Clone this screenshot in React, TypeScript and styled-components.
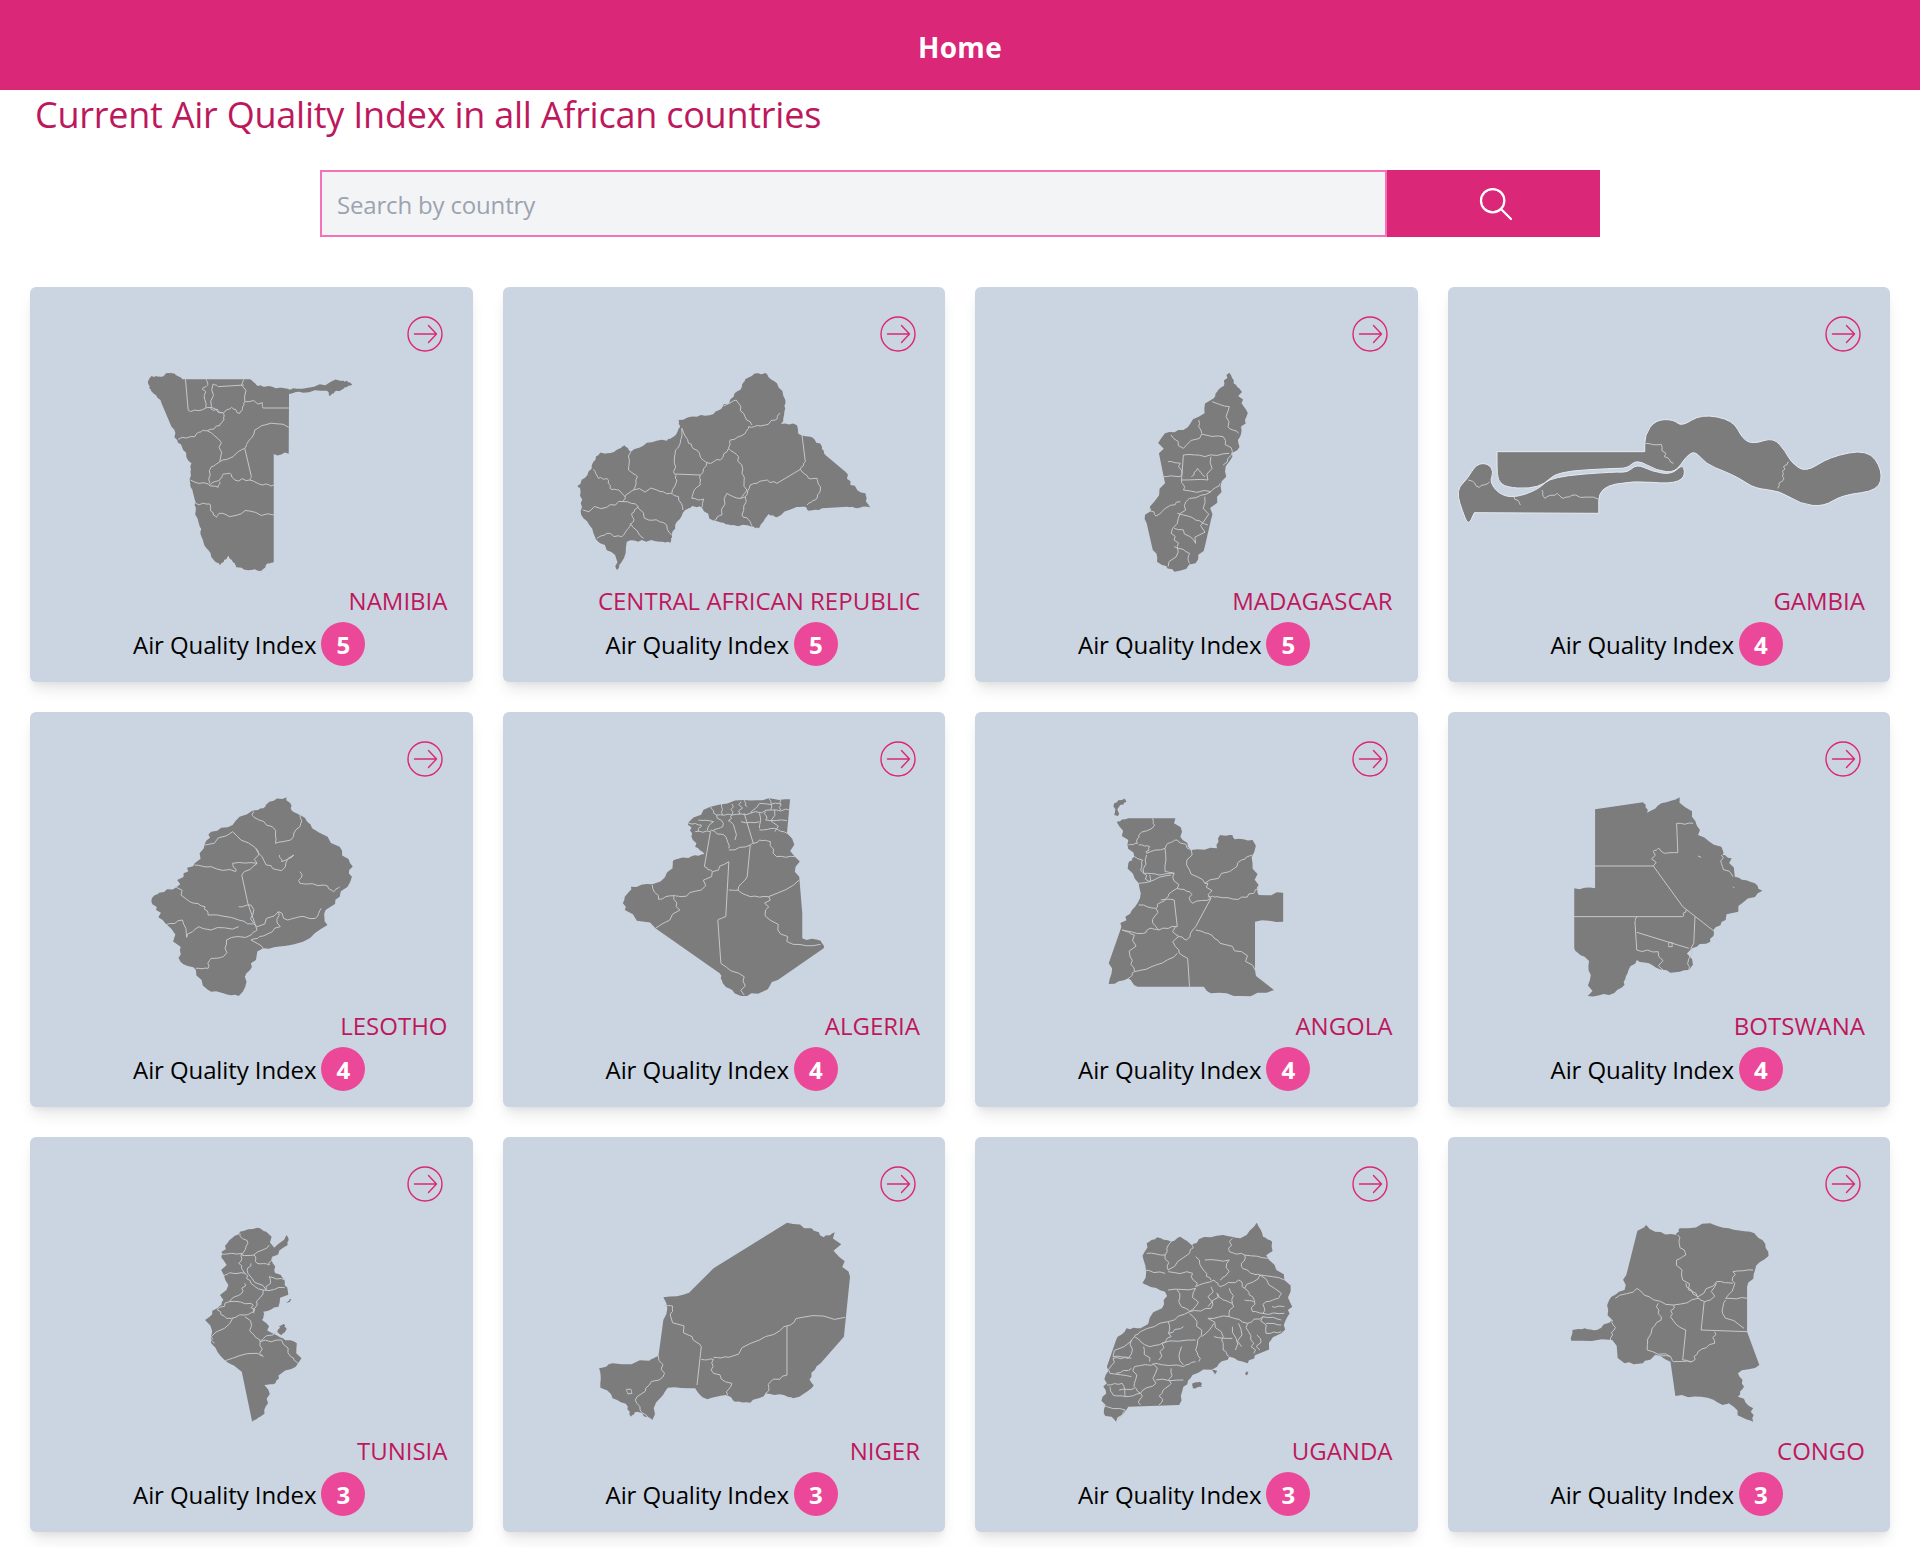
import React from "react"
import styled, { createGlobalStyle } from "styled-components"

const GlobalStyle = createGlobalStyle`
  html, body {
    margin: 0;
    padding: 0;
    background: #fff;
    font-family: "Open Sans", "Liberation Sans", sans-serif;
  }
  * { box-sizing: border-box; }
`

const Header = styled.header`
  height: 90px;
  background: #db2777;
  display: flex;
  align-items: center;
  justify-content: center;
  color: #fff;
  font-size: 28px;
  font-weight: 700;
  letter-spacing: 0.3px;
  padding-top: 4px;
`

const Title = styled.h1`
  margin: 5px 0 0;
  padding-left: 35px;
  height: 40px;
  line-height: 40px;
  font-size: 36px;
  font-weight: 400;
  color: #be185d;
  letter-spacing: -0.24px;
`

const SearchBar = styled.form`
  display: flex;
  width: 1280px;
  height: 67px;
  margin: 35px auto 50px;
`

const SearchInput = styled.input`
  flex: 1;
  min-width: 0;
  border: 2px solid #f472b6;
  background: #f3f4f6;
  padding: 2px 15px 0;
  font: inherit;
  font-size: 24px;
  letter-spacing: -0.17px;
  outline: none;
  &::placeholder {
    color: #9ca3af;
    opacity: 1;
  }
`

const SearchButton = styled.button`
  width: 213px;
  border: 0;
  padding: 0 0 0 4px;
  background: #db2777;
  display: flex;
  align-items: center;
  justify-content: center;
  svg {
    width: 40px;
    height: 40px;
    fill: none;
    stroke: #fff;
    stroke-width: 1.35;
    stroke-linecap: round;
    stroke-linejoin: round;
  }
`

const Grid = styled.main`
  display: grid;
  grid-template-columns: repeat(4, 1fr);
  gap: 30px;
  padding: 0 30px 16px;
`

const Card = styled.article`
  height: 395px;
  padding: 29px 24px 16px;
  background: #cbd5e1;
  border-radius: 6px;
  box-shadow: 0 10px 15px -3px rgba(0, 0, 0, 0.1), 0 4px 6px -2px rgba(0, 0, 0, 0.05);
  display: flex;
  flex-direction: column;
`

const ArrowIcon = styled.svg`
  align-self: flex-end;
  width: 36px;
  height: 36px;
  margin-right: 5.5px;
  flex: none;
  fill: none;
  stroke: #db2777;
  stroke-width: 1.4;
  stroke-linecap: round;
  stroke-linejoin: round;
`

const CountryMap = styled.svg`
  display: block;
  flex: none;
  width: calc(100% + 48px);
  margin: 18px -24px 0;
  height: 205px;
`

const Land = styled.path<{ $outlined?: boolean }>`
  fill: #7c7c7c;
  stroke: ${(p) => (p.$outlined ? "#e6ebf1" : "none")};
  stroke-width: 1;
  vector-effect: non-scaling-stroke;
`

const Borders = styled.path`
  fill: none;
  stroke: #c4c8cc;
  stroke-width: 1;
  stroke-linejoin: round;
  vector-effect: non-scaling-stroke;
`

const CountryName = styled.h2`
  margin: 10px 1px 0 0;
  height: 32px;
  line-height: 32px;
  font-size: 24px;
  font-weight: 400;
  text-align: right;
  color: #be185d;
  white-space: nowrap;
`

const IndexRow = styled.div`
  margin-top: 5px;
  display: flex;
  align-items: center;
  justify-content: center;
  gap: 5px;
  padding-right: 4px;
  font-size: 24px;
  color: #000;
  letter-spacing: -0.1px;
`

const Badge = styled.span`
  width: 44px;
  height: 44px;
  border-radius: 50%;
  background: #ec4899;
  color: #fff;
  font-weight: 700;
  display: flex;
  align-items: center;
  justify-content: center;
  letter-spacing: 0;
`

type Country = {
  name: string
  index: number
  viewBox: string
  land: string
  lines: string
  outlined?: boolean
}

type Point = [number, number]

const parseSubpaths = (d: string) =>
  d
    .split("M")
    .filter((s) => s.trim())
    .map((s) => ({
      closed: s.includes("Z"),
      points: s
        .replace("Z", "")
        .trim()
        .split(" L")
        .map((p) => p.split(",").map(Number) as Point),
    }))

const dist = (a: Point, b: Point) => Math.hypot(a[0] - b[0], a[1] - b[1])

const noise = (x: number, y: number) => {
  const s = Math.sin(x * 12.9898 + y * 78.233) * 43758.5453
  return s - Math.floor(s) - 0.5
}

// traced coast lines are coarse, so break the short edges up a little. long ones are real straight borders
const roughen = (d: string) =>
  parseSubpaths(d)
    .map(({ closed, points }) => {
      const ring = closed ? [...points, points[0]] : points
      let out = `M${ring[0][0]},${ring[0][1]}`
      for (let i = 1; i < ring.length; i++) {
        const [a, b] = [ring[i - 1], ring[i]]
        const len = dist(a, b)
        if (len > 8 && len < 75) {
          const nx = (a[1] - b[1]) / len
          const ny = (b[0] - a[0]) / len
          ;[0.25, 0.5, 0.75].forEach((t) => {
            const mx = a[0] + (b[0] - a[0]) * t
            const my = a[1] + (b[1] - a[1]) * t
            const off = noise(mx, my) * len * 0.22
            out += ` L${(mx + nx * off).toFixed(1)},${(my + ny * off).toFixed(1)}`
          })
        }
        out += ` L${b[0]},${b[1]}`
      }
      return closed ? out + " Z" : out
    })
    .join(" ")

// rounds the lobes, keeps corners that sit on a long straight edge
const smooth = (d: string) =>
  parseSubpaths(d)
    .map(({ points }) => {
      const n = points.length
      let out = ""
      points.forEach((cur, i) => {
        const prev = points[(i + n - 1) % n]
        const next = points[(i + 1) % n]
        const sharp = dist(prev, cur) > 110 || dist(cur, next) > 110
        const cmd = i === 0 ? "M" : " L"
        if (sharp) {
          out += `${cmd}${cur[0]},${cur[1]}`
        } else {
          const inX = (prev[0] + cur[0]) / 2
          const inY = (prev[1] + cur[1]) / 2
          const outX = (cur[0] + next[0]) / 2
          const outY = (cur[1] + next[1]) / 2
          out += `${cmd}${inX},${inY} Q${cur[0]},${cur[1]} ${outX},${outY}`
        }
      })
      return out + " Z"
    })
    .join(" ")

const countries: Country[] = [
  {
    name: "NAMIBIA",
    index: 5,
    viewBox: "30 270 1329 615",
    land: "M386,300 L392,290 L410,288 L425,290 L445,279 L462,280 L478,290 L492,298 L690,298 L710,315 L735,320 L780,323 L807,327 L808,330 L822,325 L830,326 L900,313 L965,303 L985,305 L998,314 L975,322 L965,330 L945,335 L930,348 L922,332 L850,338 L808,342 L807,521 L762,522 L762,846 L745,850 L725,872 L705,868 L680,870 L650,862 L645,850 L632,838 L625,828 L612,845 L600,855 L580,838 L560,805 L545,770 L540,740 L528,690 L525,660 L512,620 L512,575 L515,550 L490,510 L472,480 L455,440 L425,370 L400,340 L388,325 Z",
    lines:
      "M497,298 L505,390 L512,395 L560,383 L610,398 L613,420 L600,437 L562,452 L550,450 L525,470 L475,478 M562,452 L605,488 L600,545 L575,560 L570,610 M560,298 L565,313 L548,328 L558,335 L558,383 M580,312 L575,380 L572,385 L610,398 M580,312 L595,320 L672,315 M672,298 L675,365 L728,368 L730,384 L807,384 M675,365 L668,385 L660,400 L635,382 L613,398 M807,442 L735,435 L705,450 L682,490 L675,505 L695,590 L690,600 L730,615 L762,615 M675,505 L640,530 L600,545 M570,615 L600,600 L610,582 L630,580 L645,600 L690,600 M512,600 L565,612 L595,622 L600,605 M528,670 L570,672 L575,695 L590,712 L598,700 L640,708 L690,693 L762,705",
  },
  {
    name: "CENTRAL AFRICAN REPUBLIC",
    index: 5,
    viewBox: "9 270 1326 615",
    land: "M232,618 L262,585 L280,545 L300,518 L320,520 L360,505 L372,495 L392,515 L440,488 L500,482 L520,470 L540,440 L535,420 L590,410 L640,402 L665,385 L700,350 L725,320 L735,298 L775,280 L800,282 L830,310 L855,360 L852,395 L842,432 L890,436 L895,462 L935,472 L965,500 L975,525 L1035,575 L1050,615 L1095,640 L1100,670 L1110,682 L1070,685 L1040,680 L965,685 L925,692 L915,680 L880,685 L830,712 L805,702 L785,730 L775,745 L755,740 L700,735 L670,728 L640,722 L605,683 L575,678 L555,690 L530,725 L515,765 L510,788 L480,785 L425,780 L380,785 L362,850 L350,870 L345,825 L300,790 L280,760 L250,715 L242,670 L240,625 Z",
    lines:
      "M280,568 L295,595 L320,595 L330,625 L355,630 L375,650 L370,665 L320,682 L248,690 M370,665 L415,680 L395,700 L400,725 L385,745 L365,770 L320,760 L290,775 M392,515 L385,570 L412,590 L400,630 L375,650 M400,630 L470,630 L510,640 L535,650 L548,690 M410,680 L445,720 L490,728 L515,765 M390,730 L430,775 M545,445 L540,490 L525,520 L520,575 L530,600 L515,640 M545,445 L565,490 L590,510 L620,548 L600,585 L525,582 M620,548 L660,540 L685,505 L690,480 L735,460 L745,440 L780,438 L825,420 L840,400 M670,378 L708,360 L730,400 L755,435 M685,505 L715,530 L725,580 L740,630 L720,655 L680,640 L665,705 L640,722 M600,585 L600,615 L580,635 L575,655 L610,657 L605,683 M720,655 L735,650 L725,705 L750,725 L755,740 M735,650 L750,615 L790,602 L830,610 L900,568 L915,545 L905,465 M900,568 L925,595 L950,595 L960,630 L945,660 L920,675",
  },
  {
    name: "MADAGASCAR",
    index: 5,
    viewBox: "24.5 270 723 615",
    land: "M440,278 L447,310 L456,325 L460,370 L468,410 L460,450 L455,490 L445,530 L435,590 L420,650 L410,720 L400,800 L385,850 L350,875 L330,855 L315,810 L305,730 L310,680 L335,610 L325,520 L335,460 L365,450 L390,410 L410,360 L420,335 L432,310 Z",
    lines:
      "M412,365 L440,380 L438,440 L455,460 M390,420 L395,460 M345,465 L365,505 L395,462 L430,470 L445,515 L430,555 M365,525 L400,530 L440,520 M340,545 L360,550 L360,590 L330,590 M365,525 L362,600 L405,600 L410,530 M378,590 L388,565 L400,590 M362,600 L365,630 L410,635 L425,610 M410,635 L375,655 L360,700 L345,760 L355,800 L340,860 M310,685 L320,708 L340,680 L360,665 M355,700 L385,720 L405,735 M400,650 L400,720 L385,790 L365,750 L350,745 M350,800 L375,820 L375,850",
  },
  {
    name: "GAMBIA",
    index: 4,
    viewBox: "797 270 722 615",
    outlined: true,
    land: "M877,515 L1118,515 L1118,465 L1135,420 L1165,418 L1178,440 L1210,402 L1262,420 L1278,478 L1296,492 L1328,472 L1348,515 L1356,545 L1380,578 L1420,530 L1482,508 L1506,570 L1500,632 L1440,645 L1410,680 L1372,672 L1338,632 L1298,626 L1272,594 L1248,574 L1218,552 L1200,512 L1185,530 L1168,578 L1138,572 L1105,538 L1090,565 L1065,565 L975,575 L955,612 L930,626 L892,622 L878,602 L877,560 Z M815,620 L828,598 L843,552 L862,550 L872,575 L865,605 L880,642 L905,654 L945,628 L965,590 L1070,575 L1090,578 L1105,552 L1130,574 L1162,584 L1181,550 L1184,594 L1160,612 L1100,602 L1043,622 L1043,700 L840,698 L830,738 L820,690 L813,650 Z",
    lines:
      "M1118,490 L1145,493 L1150,530 L1165,550 M1352,545 L1342,575 L1345,595 L1335,625 M830,600 L848,622 L865,605 M950,630 L955,655 L975,640 L985,655 L1005,645 L1043,658 M905,650 L915,675",
  },
  {
    name: "LESOTHO",
    index: 4,
    viewBox: "49 285 723 615",
    land: "M248,595 L260,578 L288,562 L300,520 L318,490 L335,430 L345,395 L380,375 L412,332 L430,325 L440,305 L468,292 L475,325 L490,345 L510,385 L555,440 L572,490 L575,530 L555,590 L532,630 L535,675 L495,725 L465,738 L430,745 L410,790 L400,830 L390,888 L365,880 L340,870 L320,810 L295,785 L295,740 L270,670 L255,630 Z",
    lines:
      "M412,332 L415,352 L445,380 L450,430 L475,420 L490,380 L490,345 M335,435 L380,395 L415,440 L420,490 L395,525 L405,610 L420,690 L410,705 L370,720 L365,770 L345,775 L340,805 L320,805 M418,445 L435,495 L460,512 L480,465 L460,485 L457,465 M318,495 L345,500 L385,515 L380,490 L420,490 M490,515 L490,550 L530,555 L545,575 L555,560 M288,562 L310,605 L335,620 L340,645 L390,660 L420,680 M270,675 L298,660 L305,712 L325,680 L345,690 L390,680 M420,680 L455,635 L470,660 L490,650 L515,655 L525,625 M455,635 L458,680 L430,708 L410,720 L430,745 M390,620 L410,615 L415,670",
  },
  {
    name: "ALGERIA",
    index: 4,
    viewBox: "821 285 723 615",
    land: "M1020,590 L1030,560 L1065,553 L1098,505 L1100,480 L1130,468 L1150,462 L1135,440 L1130,400 L1125,365 L1160,320 L1215,300 L1255,295 L1290,298 L1285,400 L1298,470 L1305,530 L1310,640 L1310,715 L1340,722 L1345,745 L1270,840 L1245,875 L1210,888 L1180,850 L1175,820 L1070,685 L1020,630 Z",
    lines:
      "M1135,395 L1160,395 L1150,500 L1163,515 L1145,570 L1110,590 L1100,587 L1075,598 L1065,555 M1100,587 L1110,630 L1070,685 M1163,515 L1190,485 L1185,650 L1172,660 L1177,790 L1215,830 L1215,885 M1190,450 L1225,435 L1220,530 L1205,570 L1225,590 L1255,590 L1305,540 M1225,435 L1240,420 L1258,425 L1268,470 L1298,470 M1205,570 L1190,570 M1255,590 L1250,630 L1270,690 L1295,733 L1340,733 M1160,390 L1185,410 L1190,445 M1190,360 L1200,420 M1215,340 L1230,430 M1240,390 L1265,385 L1285,400 M1160,320 L1170,345 L1195,345 L1195,312 M1195,345 L1225,340 L1240,310 M1225,340 L1260,330 L1290,330 M1140,360 L1165,365 L1155,390 M1240,340 L1240,385 M1265,330 L1265,395 M1170,345 L1180,380 L1165,390 M1215,300 L1220,320 M1255,295 L1258,330 M1125,370 L1145,375 L1140,395 M1195,345 L1190,365 M1178,312 L1180,345 M1210,305 L1208,342 M1240,310 L1275,312 M1275,300 L1275,330 M1210,365 L1240,365 M1250,335 L1250,360 L1285,362",
  },
  {
    name: "ANGOLA",
    index: 4,
    viewBox: "24.5 285 723 615",
    land: "M252,310 L268,295 L272,305 L260,320 L258,348 L252,345 Z M256,365 L275,355 L352,355 L360,410 L378,450 L420,445 L425,405 L445,405 L448,418 L478,420 L478,490 L488,555 L488,585 L528,578 L528,665 L482,665 L482,810 L513,870 L460,888 L410,880 L398,860 L290,860 L275,835 L243,852 L243,790 L262,690 L270,650 L290,610 L292,550 L275,490 L285,470 L275,420 Z",
    lines:
      "M315,355 L318,375 L292,405 L290,430 L275,435 M292,435 L310,440 L305,460 L335,445 L340,430 L355,420 L378,450 L375,510 L400,550 L440,515 L460,480 L478,465 M285,470 L298,480 L295,510 L310,545 L292,550 M305,465 L300,520 L325,525 L350,520 L355,565 L375,575 L380,610 L410,595 L405,550 L400,550 M335,445 L335,515 L350,520 M310,525 L310,545 L345,525 M355,565 L340,590 L325,610 L320,625 L292,615 M328,600 L350,600 L355,680 L325,690 L310,685 L300,700 L265,690 M320,625 L315,670 L325,690 M352,680 L352,740 L372,775 L375,860 M410,595 L385,680 L370,720 L355,705 M385,690 L405,700 L425,730 L460,755 L482,810 M405,590 L420,590 L455,598 L480,580 L488,560 M265,690 L285,705 L278,770 L285,815 L320,795 L355,760 M285,815 L275,835",
  },
  {
    name: "BOTSWANA",
    index: 4,
    viewBox: "797 285 722 615",
    land: "M1037,328 L1115,307 L1122,338 L1145,310 L1175,292 L1195,350 L1205,405 L1243,440 L1245,465 L1260,475 L1265,530 L1290,545 L1310,572 L1280,605 L1250,660 L1230,690 L1225,725 L1195,745 L1190,810 L1160,818 L1130,795 L1105,780 L1090,820 L1085,855 L1060,885 L1025,888 L1030,825 L1020,770 L1003,745 L1003,565 L1037,565 Z",
    lines:
      "M1037,498 L1132,498 L1180,620 L1230,692 M1003,650 L1180,650 L1185,630 M1132,498 L1132,455 L1140,445 L1150,460 L1172,458 L1170,370 L1197,370 M1105,650 L1102,665 L1105,750 L1140,755 L1148,810 M1105,697 L1190,745 M1200,650 L1198,730 L1188,790 L1190,810 M1243,465 L1245,500 L1262,530 M1205,468 L1210,472 M1262,560 L1264,564 M1157,728 L1157,740 L1163,740 L1163,728 Z",
  },
  {
    name: "TUNISIA",
    index: 3,
    viewBox: "49 300 723 615",
    land: "M362,395 L375,360 L392,335 L420,323 L435,335 L445,400 L468,345 L470,375 L445,410 L448,450 L465,480 L470,510 L455,560 L430,575 L428,600 L445,640 L462,655 L485,670 L487,730 L460,760 L450,790 L432,795 L438,850 L425,890 L412,905 L395,755 L368,722 L345,670 L335,600 L355,565 L365,540 L368,480 L365,420 Z M467,548 L476,536 L474,546 Z M456,618 L464,612 L468,628 L460,646 L455,640 Z",
    lines:
      "M362,403 L395,400 L390,430 L400,460 L375,458 L365,470 M392,340 L405,370 L395,405 L415,405 L440,375 M400,460 L410,490 L430,510 L465,503 M400,490 L395,520 L375,545 L355,570 L370,595 L400,585 L415,575 L410,550 L375,545 M430,510 L420,555 L415,580 M415,405 L420,430 L440,435 L445,410 M410,430 L405,460 L435,510 L440,470 L465,480 M380,595 L345,650 L350,670 M400,590 L415,645 L425,665 L450,635 M425,665 L430,710 L420,700 L368,722 M425,665 L460,660 L475,710 L487,730",
  },
  {
    name: "NIGER",
    index: 3,
    viewBox: "821 300 723 615",
    land: "M978,745 L1000,730 L1060,722 L1075,708 L1083,600 L1083,532 L1125,518 L1165,445 L1285,308 L1325,325 L1345,352 L1363,337 L1370,410 L1388,470 L1378,650 L1340,730 L1325,770 L1325,805 L1295,835 L1280,825 L1250,820 L1225,848 L1200,845 L1185,825 L1155,838 L1135,805 L1090,803 L1080,830 L1065,900 L1040,875 L1030,890 L1025,860 L1000,835 L980,790 Z",
    lines:
      "M1083,557 L1098,558 L1095,590 L1130,650 L1145,680 L1138,795 M1145,718 L1165,718 L1165,760 L1195,790 L1188,825 M1165,712 L1190,712 L1240,660 L1280,620 L1310,592 L1380,592 M1285,618 L1285,765 L1258,785 L1250,820 M1075,708 L1085,760 L1060,795 L1040,830 L1045,870 L1065,900 M1023,808 L1030,808 L1032,820 L1025,822 Z",
  },
  {
    name: "UGANDA",
    index: 3,
    viewBox: "24.5 300 723 615",
    land: "M305,370 L322,352 L345,365 L360,350 L380,378 L390,358 L430,345 L458,355 L485,308 L495,350 L510,365 L505,420 L530,480 L540,550 L535,590 L525,640 L490,700 L470,730 L440,710 L420,740 L380,765 L365,800 L358,855 L275,860 L255,905 L235,880 L233,830 L240,790 L240,740 L255,660 L272,625 L295,625 L330,565 L335,515 L305,495 L298,490 L300,420 Z M380,790 L392,785 L396,800 L380,805 Z M412,750 L420,752 L416,765 Z M466,755 L472,755 L468,766 Z",
    lines:
      "M305,400 L335,405 L345,365 M335,405 L340,450 L375,400 L380,378 M340,455 L380,460 L385,500 L415,480 L425,500 L455,480 L465,505 L490,465 L530,480 M385,410 L400,455 L410,480 M400,420 L440,420 L435,465 L425,480 M445,355 L440,395 L465,405 L505,415 M465,405 L460,440 L475,460 L490,465 M340,510 L385,505 L385,560 L375,575 L340,605 M355,510 L360,555 L375,575 L410,565 L420,520 L430,540 L445,550 L440,590 L405,595 M465,505 L478,530 L478,575 L495,580 L530,580 M490,465 L525,520 L520,535 L500,545 L495,580 M340,605 L295,635 L285,650 L250,710 L280,715 M375,580 L395,630 L385,690 L390,725 M405,595 L430,650 L430,690 L440,710 M440,590 L470,610 L495,590 L525,600 M470,610 L475,660 L480,700 M495,590 L500,640 L525,635 M455,610 L460,680 M340,605 L345,650 L330,670 L325,720 M285,650 L310,680 L330,670 L385,660 M280,660 L275,715 L250,715 L245,760 L280,770 M285,740 L320,730 L365,740 L385,725 M315,730 L320,790 L295,820 L295,855 M285,740 L285,790 L295,820 M345,745 L345,790 L330,820 L325,855 M320,780 L365,780 M240,795 L265,790 L270,830 L250,825 L245,800 M233,855 L270,870 L258,900 M270,830 L295,820 M410,500 L405,560 M440,505 L445,550 M465,540 L480,545 M300,450 L335,460 M365,620 L340,640 M415,610 L395,650 M415,650 L445,655 M445,620 L450,690 M500,610 L525,615 M485,645 L490,690 M255,760 L280,745 M260,810 L285,805 M362,680 L365,735 M300,680 L310,725 M510,560 L530,560",
  },
  {
    name: "CONGO",
    index: 3,
    viewBox: "797 300 722 615",
    land: "M1105,340 L1120,315 L1135,335 L1170,345 L1175,325 L1225,310 L1255,325 L1290,335 L1310,360 L1320,408 L1298,450 L1285,500 L1285,635 L1305,735 L1270,760 L1280,800 L1270,830 L1295,865 L1295,905 L1280,895 L1255,850 L1245,855 L1210,830 L1168,828 L1160,725 L1135,705 L1115,730 L1085,730 L1065,660 L998,662 L1000,630 L1020,625 L1040,630 L1065,600 L1060,540 L1085,510 L1090,450 Z",
    lines:
      "M1172,345 L1175,375 L1185,405 L1170,420 L1180,480 L1205,535 L1165,555 L1125,530 L1105,505 L1070,535 M1185,490 L1205,530 L1235,485 L1262,490 M1262,455 L1295,450 M1262,455 L1265,490 L1250,535 L1285,535 M1205,535 L1215,545 L1210,630 L1285,635 M1250,540 L1245,580 L1280,625 M1235,490 L1225,540 L1215,545 M1140,550 L1145,590 L1130,625 L1122,690 L1160,710 M1165,555 L1160,590 L1185,630 L1180,720 L1195,725 L1205,695 L1232,670 L1232,635 M1065,600 L1068,630 L1062,660 M1135,705 L1160,710 L1165,725 L1195,725",
  },
]

const CountryCard = ({ country }: { country: Country }) => (
  <Card>
    <ArrowIcon viewBox="0 0 36 36">
      <circle cx="18" cy="18" r="17" />
      <path d="M7.5 18H29.5M21.5 9.5L29.5 18L21.5 26.5" />
    </ArrowIcon>
    <CountryMap viewBox={country.viewBox} preserveAspectRatio="none">
      <Land d={country.outlined ? smooth(country.land) : roughen(country.land)} $outlined={country.outlined} />
      <Borders d={roughen(country.lines)} />
    </CountryMap>
    <CountryName>{country.name}</CountryName>
    <IndexRow>
      Air Quality Index
      <Badge>{country.index}</Badge>
    </IndexRow>
  </Card>
)

const App = () => (
  <>
    <GlobalStyle />
    <Header>Home</Header>
    <Title>Current Air Quality Index in all African countries</Title>
    <SearchBar onSubmit={(e) => e.preventDefault()}>
      <SearchInput placeholder="Search by country" />
      <SearchButton type="submit" aria-label="Search">
        <svg viewBox="0 0 24 24">
          <path d="M21 21l-6-6m2-5a7 7 0 11-14 0 7 7 0 0114 0z" />
        </svg>
      </SearchButton>
    </SearchBar>
    <Grid>
      {countries.map((c) => (
        <CountryCard key={c.name} country={c} />
      ))}
    </Grid>
  </>
)

export default App
